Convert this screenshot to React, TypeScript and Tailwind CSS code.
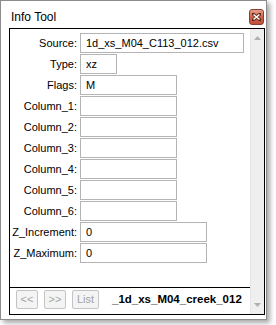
const fields: { label: string; value: string; width: string }[] = [
  { label: "Source:", value: "1d_xs_M04_C113_012.csv", width: "w-[164px]" },
  { label: "Type:", value: "xz", width: "w-[37px]" },
  { label: "Flags:", value: "M", width: "w-[97px]" },
  { label: "Column_1:", value: "", width: "w-[97px]" },
  { label: "Column_2:", value: "", width: "w-[97px]" },
  { label: "Column_3:", value: "", width: "w-[97px]" },
  { label: "Column_4:", value: "", width: "w-[97px]" },
  { label: "Column_5:", value: "", width: "w-[97px]" },
  { label: "Column_6:", value: "", width: "w-[97px]" },
  { label: "Z_Increment:", value: "0", width: "w-[127px]" },
  { label: "Z_Maximum:", value: "0", width: "w-[127px]" },
];

function NavButton({ label, width }: { label: string; width: string }) {
  return (
    <button
      disabled
      className={`${width} h-[19px] rounded-[2px] border border-[#c4c4c4] bg-[#f4f4f4] text-[11px] text-[#a3a3a3] flex items-center justify-center leading-none`}
    >
      {label}
    </button>
  );
}

export default function App() {
  return (
    <div className="w-[276px] h-[325px] bg-white font-['Liberation_Sans',Arial,sans-serif] text-black">
      <div className="w-[267px] h-[320px] border border-[#8c8c8c] bg-white shadow-[3px_3px_5px_rgba(0,0,0,0.35)] flex flex-col">
        {/* Title bar */}
        <div className="h-[27px] flex justify-between pl-[10px] pr-[2px] pt-[8px]">
          <span className="text-[12px] leading-[16px]">Info Tool</span>
          <div className="w-[15px] h-[16px] rounded-[3px] border border-[#8a4030] bg-gradient-to-b from-[#e4a08c] via-[#cf6148] to-[#c0503a] flex items-center justify-center">
            <svg width="9" height="8" viewBox="0 0 9 8">
              <path d="M1 1 L8 7 M8 1 L1 7" stroke="#5a2418" strokeWidth="3" strokeLinecap="square" />
              <path d="M1.5 1.5 L7.5 6.5 M7.5 1.5 L1.5 6.5" stroke="#ffffff" strokeWidth="1.6" />
            </svg>
          </div>
        </div>

        {/* Panel */}
        <div className="ml-[8px] mr-[1px] mb-[4px] flex-1 border border-black flex min-h-0">
          <div className="w-[240px] flex flex-col">
            <div className="flex-1 pt-[4px] flex flex-col gap-[1px]">
              {fields.map((f) => (
                <div key={f.label} className="flex items-center h-[20px]">
                  <span className="w-[67px] text-right text-[11px] leading-none">{f.label}</span>
                  <div
                    className={`${f.width} ml-[3px] h-[20px] border border-[#b4b4b4] bg-white pl-[5px] text-[11px] flex items-center`}
                  >
                    {f.value}
                  </div>
                </div>
              ))}
            </div>
            <div className="h-[1px] bg-black" />
            <div className="h-[26px] flex items-start pt-[2px] pl-[6px]">
              <div className="flex gap-[6px]">
                <NavButton label="<<" width="w-[22px]" />
                <NavButton label=">>" width="w-[22px]" />
                <NavButton label="List" width="w-[27px]" />
              </div>
              <span className="ml-[13px] mt-[4px] text-[11.5px] font-bold leading-none">_1d_xs_M04_creek_012</span>
            </div>
          </div>

          {/* Scrollbar */}
          <div className="w-[14px] bg-[#efefef] border-l border-[#e6e6e6] flex flex-col items-center justify-between py-[7px]">
            <svg width="7" height="4" viewBox="0 0 7 4">
              <path d="M0 4 L3.5 0 L7 4 Z" fill="#b0b0b0" />
            </svg>
            <svg width="7" height="4" viewBox="0 0 7 4">
              <path d="M0 0 L3.5 4 L7 0 Z" fill="#b0b0b0" />
            </svg>
          </div>
        </div>
      </div>
    </div>
  );
}
